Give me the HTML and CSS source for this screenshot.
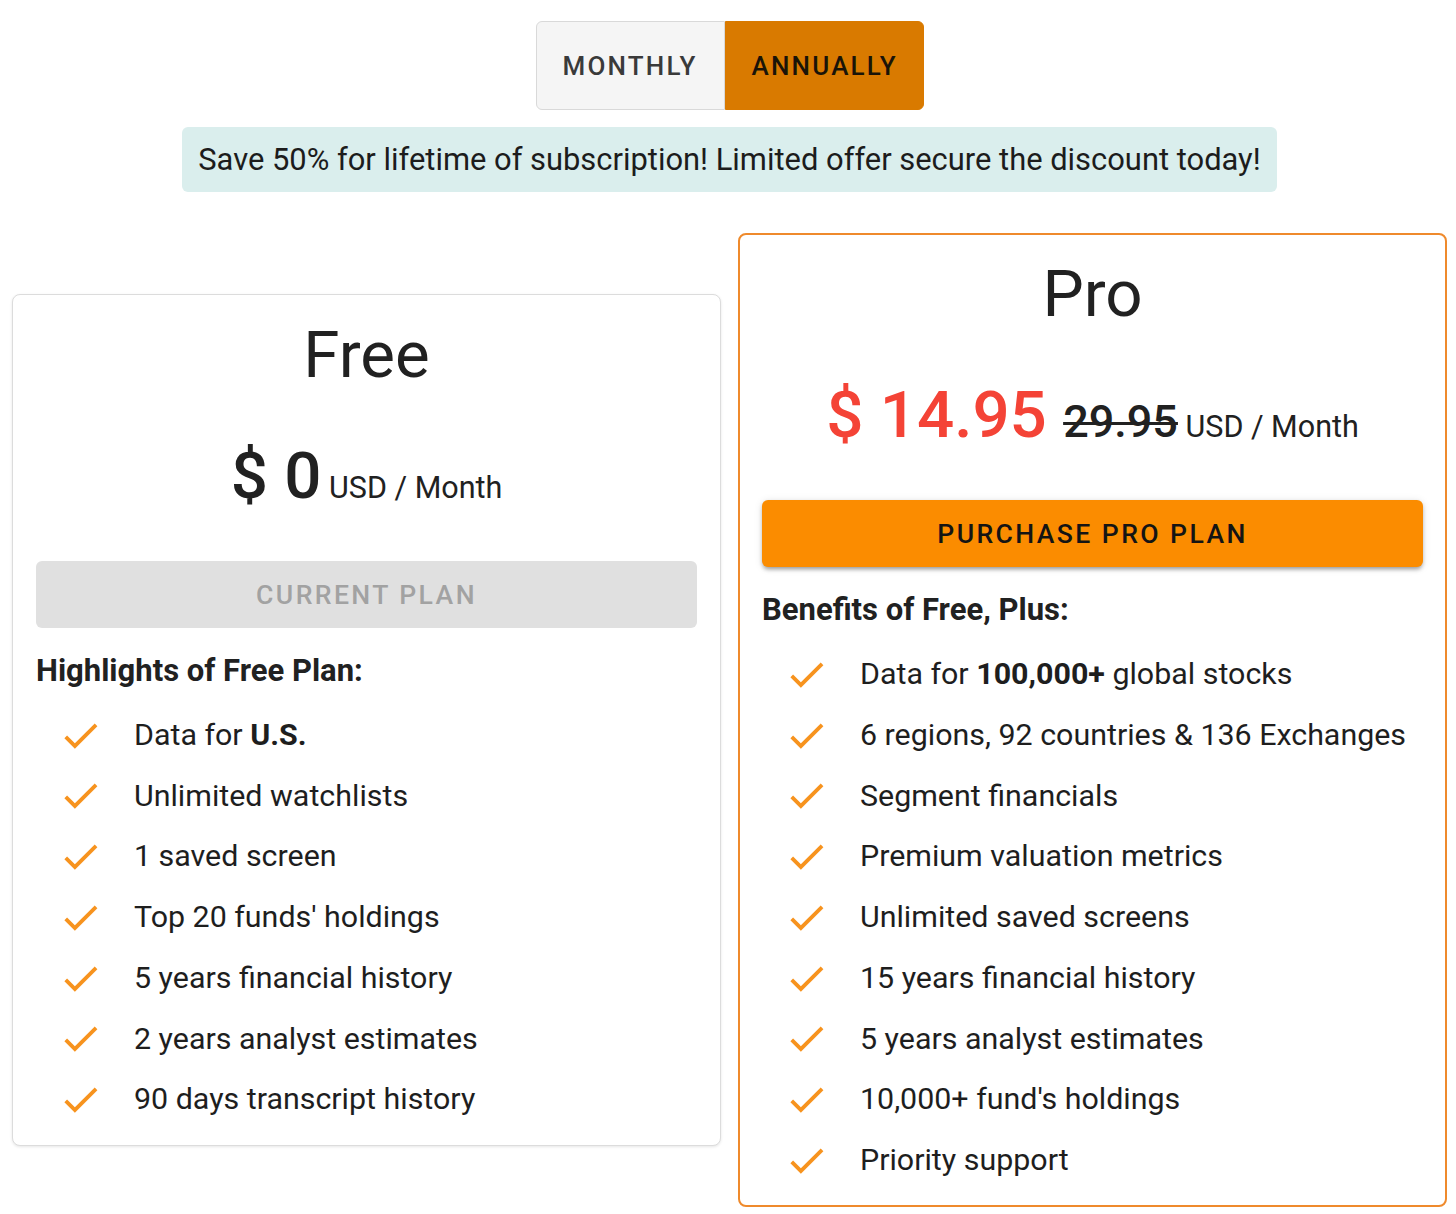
FILE: index.html
```
<!DOCTYPE html>
<html lang="en">
<head>
<meta charset="utf-8">
<title>Plans</title>
<link rel="stylesheet" href="styles.css">
</head>
<body>
<div class="page">
  <div class="toggle">
    <button class="toggle-btn monthly">Monthly</button>
    <button class="toggle-btn annually">Annually</button>
  </div>
  <div class="banner">Save 50% for lifetime of subscription! Limited offer secure the discount today!</div>
  <div class="plans">
    <section class="card free">
      <h2 class="plan-title">Free</h2>
      <div class="price"><span class="amount">$ 0</span><span class="unit"> USD / Month</span></div>
      <button class="plan-btn current">Current Plan</button>
      <h3 class="list-heading">Highlights of Free Plan:</h3>
      <ul class="features">
        <li><svg class="check" viewBox="0 0 24 24"><path d="M9 16.17L4.83 12l-1.42 1.41L9 19 21 7l-1.41-1.41z"/></svg><span>Data for <b>U.S.</b></span></li>
        <li><svg class="check" viewBox="0 0 24 24"><path d="M9 16.17L4.83 12l-1.42 1.41L9 19 21 7l-1.41-1.41z"/></svg><span>Unlimited watchlists</span></li>
        <li><svg class="check" viewBox="0 0 24 24"><path d="M9 16.17L4.83 12l-1.42 1.41L9 19 21 7l-1.41-1.41z"/></svg><span>1 saved screen</span></li>
        <li><svg class="check" viewBox="0 0 24 24"><path d="M9 16.17L4.83 12l-1.42 1.41L9 19 21 7l-1.41-1.41z"/></svg><span>Top 20 funds' holdings</span></li>
        <li><svg class="check" viewBox="0 0 24 24"><path d="M9 16.17L4.83 12l-1.42 1.41L9 19 21 7l-1.41-1.41z"/></svg><span>5 years financial history</span></li>
        <li><svg class="check" viewBox="0 0 24 24"><path d="M9 16.17L4.83 12l-1.42 1.41L9 19 21 7l-1.41-1.41z"/></svg><span>2 years analyst estimates</span></li>
        <li><svg class="check" viewBox="0 0 24 24"><path d="M9 16.17L4.83 12l-1.42 1.41L9 19 21 7l-1.41-1.41z"/></svg><span>90 days transcript history</span></li>
      </ul>
    </section>
    <section class="card pro">
      <h2 class="plan-title">Pro</h2>
      <div class="price"><span class="amount">$ 14.95 </span><span class="old">29.95</span><span class="unit"> USD / Month</span></div>
      <button class="plan-btn purchase">Purchase Pro Plan</button>
      <h3 class="list-heading">Benefits of Free, Plus:</h3>
      <ul class="features">
        <li><svg class="check" viewBox="0 0 24 24"><path d="M9 16.17L4.83 12l-1.42 1.41L9 19 21 7l-1.41-1.41z"/></svg><span>Data for <b>100,000+</b> global stocks</span></li>
        <li><svg class="check" viewBox="0 0 24 24"><path d="M9 16.17L4.83 12l-1.42 1.41L9 19 21 7l-1.41-1.41z"/></svg><span>6 regions, 92 countries &amp; 136 Exchanges</span></li>
        <li><svg class="check" viewBox="0 0 24 24"><path d="M9 16.17L4.83 12l-1.42 1.41L9 19 21 7l-1.41-1.41z"/></svg><span>Segment financials</span></li>
        <li><svg class="check" viewBox="0 0 24 24"><path d="M9 16.17L4.83 12l-1.42 1.41L9 19 21 7l-1.41-1.41z"/></svg><span>Premium valuation metrics</span></li>
        <li><svg class="check" viewBox="0 0 24 24"><path d="M9 16.17L4.83 12l-1.42 1.41L9 19 21 7l-1.41-1.41z"/></svg><span>Unlimited saved screens</span></li>
        <li><svg class="check" viewBox="0 0 24 24"><path d="M9 16.17L4.83 12l-1.42 1.41L9 19 21 7l-1.41-1.41z"/></svg><span>15 years financial history</span></li>
        <li><svg class="check" viewBox="0 0 24 24"><path d="M9 16.17L4.83 12l-1.42 1.41L9 19 21 7l-1.41-1.41z"/></svg><span>5 years analyst estimates</span></li>
        <li><svg class="check" viewBox="0 0 24 24"><path d="M9 16.17L4.83 12l-1.42 1.41L9 19 21 7l-1.41-1.41z"/></svg><span>10,000+ fund's holdings</span></li>
        <li><svg class="check" viewBox="0 0 24 24"><path d="M9 16.17L4.83 12l-1.42 1.41L9 19 21 7l-1.41-1.41z"/></svg><span>Priority support</span></li>
      </ul>
    </section>
  </div>
</div>
</body>
</html>
```
FILE: styles.css
```
* { box-sizing: border-box; }

body {
  margin: 0;
  background: #fff;
  color: #212121;
  font-family: Roboto, "Noto Sans", "Liberation Sans", sans-serif;
}

.page {
  width: 1435px;
  margin-left: 12px;
  padding-top: 21px;
  display: flex;
  flex-direction: column;
  align-items: center;
}

.toggle {
  display: flex;
  height: 89px;
}

.toggle-btn {
  font-family: inherit;
  font-size: 26px;
  font-weight: 500;
  letter-spacing: 2.2px;
  text-transform: uppercase;
  padding: 0 26px;
  cursor: pointer;
}

.toggle-btn.monthly {
  width: 189px;
  background: #f5f5f5;
  color: #3a3a3a;
  border: 1px solid #d9d9d9;
  border-radius: 6px 0 0 6px;
}

.toggle-btn.annually {
  width: 199px;
  background: #d97a00;
  color: #1a1408;
  border: 1px solid #d97a00;
  border-radius: 0 6px 6px 0;
}

.banner {
  margin-top: 17px;
  height: 65px;
  line-height: 65px;
  padding: 0 16px;
  background: #daeeed;
  border-radius: 6px;
  font-size: 30.9px;
  color: #1c1c1c;
  white-space: nowrap;
}

.plans {
  margin-top: 41px;
  width: 100%;
  display: grid;
  grid-template-columns: 709px 709px;
  column-gap: 17px;
  align-items: center;
}

.card {
  border: 1px solid #dcdcdc;
  border-radius: 8px;
  padding: 22px 23px 15px;
  box-shadow: 0 1px 3px rgba(0, 0, 0, 0.1);
  background: #fff;
}

.card.pro {
  border: 2px solid #ef8a2c;
  padding: 21px 22px 14px;
  box-shadow: none;
}

.plan-title {
  margin: 0;
  text-align: center;
  font-size: 65.5px;
  font-weight: 400;
  line-height: 76px;
}

.price {
  margin-top: 43px;
  height: 80px;
  text-align: center;
  font-size: 65.5px;
  line-height: 80px;
  white-space: nowrap;
}

.amount {
  font-weight: 500;
}

.pro .amount {
  color: #f44336;
}

.old {
  font-size: 45px;
  font-weight: 500;
  line-height: 1;
  text-decoration: line-through;
  text-decoration-thickness: 3px;
}

.unit {
  font-size: 30.5px;
  font-weight: 400;
  line-height: 1;
}

.plan-btn {
  display: block;
  width: 100%;
  height: 67px;
  margin-top: 45px;
  border: none;
  border-radius: 6px;
  font-family: inherit;
  font-size: 26.6px;
  font-weight: 500;
  letter-spacing: 2.4px;
  text-transform: uppercase;
}

.plan-btn.current {
  background: #e0e0e0;
  color: #a2a2a2;
}

.plan-btn.purchase {
  background: #fb8c00;
  color: #141414;
  box-shadow: 0 4px 4px -2px rgba(0, 0, 0, 0.25), 0 2px 4px rgba(0, 0, 0, 0.14), 0 1px 8px rgba(0, 0, 0, 0.1);
}

.list-heading {
  margin: 23px 0 0;
  font-size: 31px;
  font-weight: 700;
  line-height: 40px;
}

.features {
  list-style: none;
  margin: 14px 0 0;
  padding: 0;
}

.features li {
  display: flex;
  align-items: center;
  height: 60.75px;
  line-height: 60.75px;
  padding-left: 21.6px;
  font-size: 30.4px;
  color: #1e1e1e;
}

.features b {
  font-weight: 700;
}

.check {
  flex-shrink: 0;
  width: 45px;
  height: 45px;
  margin-right: 31.4px;
  fill: #f7931e;
}
```
